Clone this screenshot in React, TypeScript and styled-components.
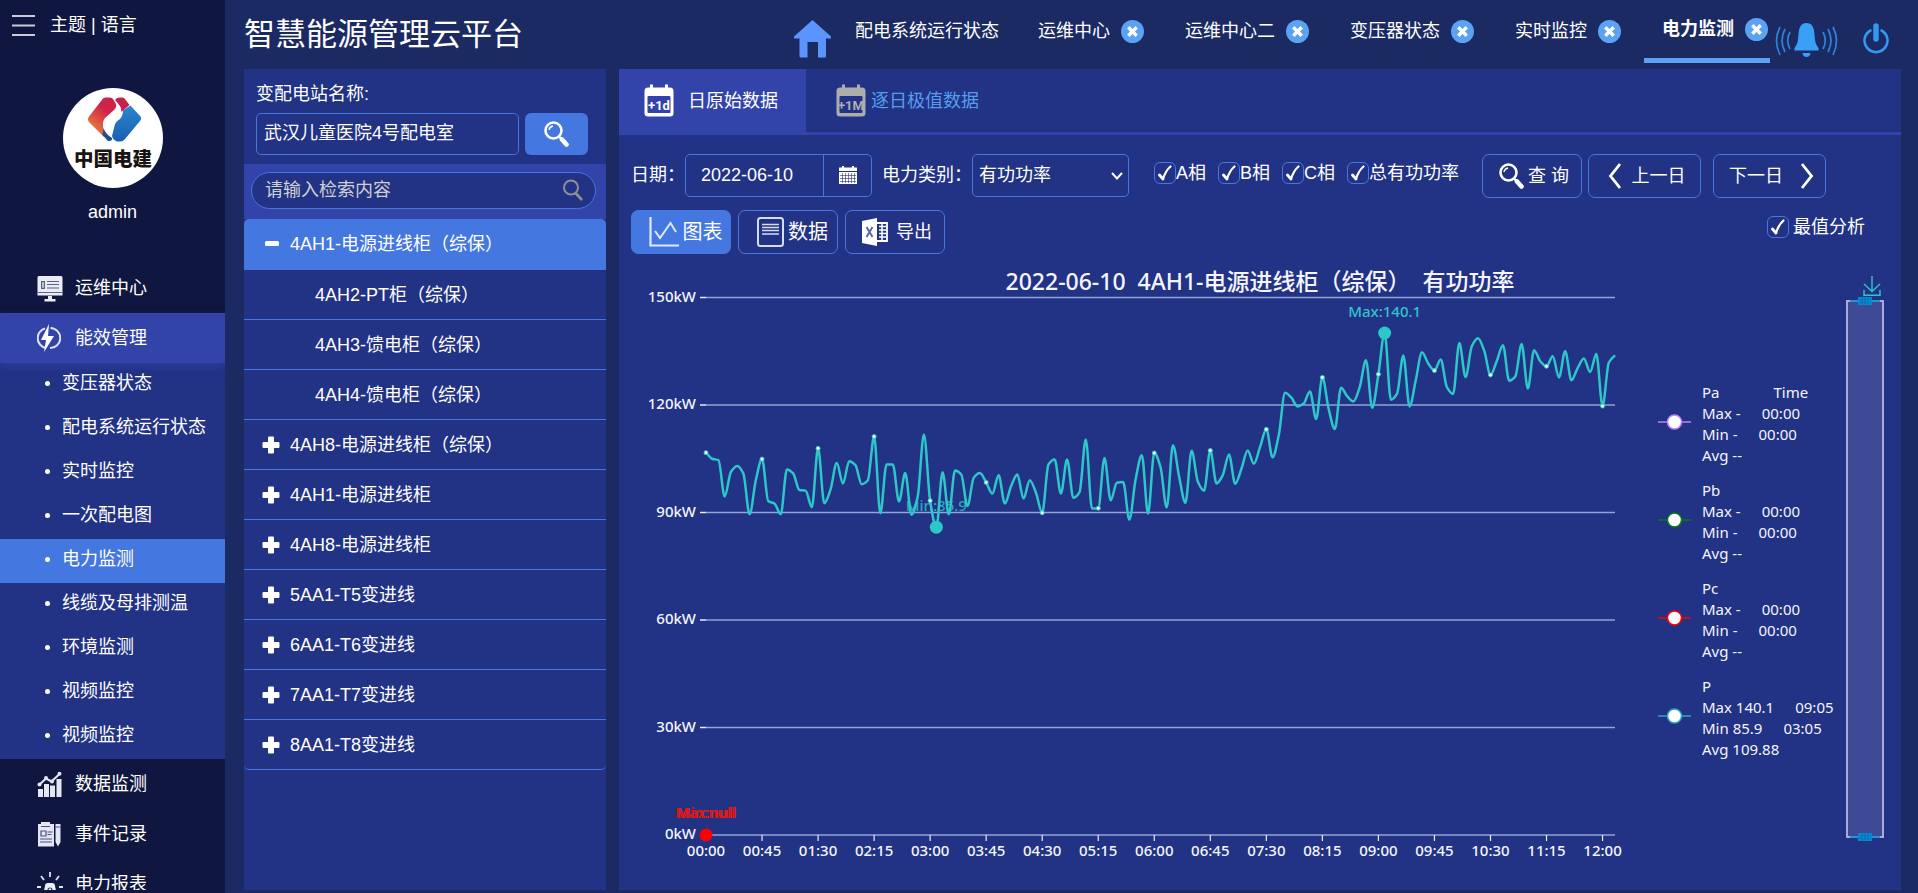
import React from "react";
import styled, { createGlobalStyle, css } from "styled-components";

const c = {
  page: "#1c2a64",
  side: "#0f1740",
  panel: "#223285",
  band: "#3244a9",
  accent: "#4477df",
  sky: "#5ba2f3",
  teal: "#2ec7c9",
};

const sans = `"Liberation Sans", "Noto Sans CJK SC", sans-serif`;
const chartFont = `"Noto Sans", "Noto Sans CJK SC", sans-serif`;

const GlobalStyle = createGlobalStyle`
  *, *::before, *::after { box-sizing: border-box; }
  body { margin: 0; background: ${c.page}; color: #fff; font: 18px/26px ${sans}; }
  button, input, select { font: inherit; color: inherit; margin: 0; }
  button { padding: 0; border: 0; background: none; cursor: pointer; }
  a { color: inherit; text-decoration: none; }
  ul { list-style: none; margin: 0; padding: 0; }
  h1, h2, p { margin: 0; font-weight: 400; }
  svg { display: block; flex: none; }
`;

/* ---------- shell ---------- */

const Shell = styled.div`
  display: flex;
  height: 100vh;
  overflow: hidden;
`;

const Sidebar = styled.aside`
  flex: 0 0 225px;
  background: ${c.side};
  padding-bottom: 3px;
  display: flex;
  flex-direction: column;
`;

const SideTop = styled.div`
  display: flex;
  align-items: center;
  gap: 15px;
  height: 50px;
  padding-left: 12px;
`;

const Profile = styled.div`
  display: flex;
  flex-direction: column;
  align-items: center;
  gap: 11px;
  padding-top: 38px;
  height: 213px;
`;

const Menu = styled.nav`
  flex: 1;
  min-height: 0;
  overflow: hidden;
`;

const MenuLink = styled.a<{ $open?: boolean }>`
  display: flex;
  align-items: center;
  height: 50px;
  padding-left: 37px;
  background: ${(p) => (p.$open ? c.band : "transparent")};
  span { flex: 0 0 38px; }
  ${(p) => p.$open && css`position: relative; box-shadow: 0 4px 8px rgba(50, 68, 169, 0.6);`}
`;

const SubMenu = styled.ul`
  background: ${c.panel};
`;

const SubLink = styled.a<{ $active?: boolean }>`
  display: flex;
  align-items: center;
  gap: 12px;
  height: 44px;
  padding: 0 0 4px 45px;
  background: ${(p) => (p.$active ? c.accent : "transparent")};
  &::before {
    content: "";
    width: 5px;
    height: 5px;
    border-radius: 50%;
    background: #fff;
  }
`;

const Main = styled.div`
  flex: 1;
  min-width: 0;
  display: flex;
  flex-direction: column;
  padding: 0 17px 3px 19px;
`;

/* ---------- header ---------- */

const Header = styled.header`
  display: flex;
  height: 69px;
`;

const Title = styled.h1`
  font-size: 31px;
  line-height: 69px;
  white-space: nowrap;
`;

const HeaderNav = styled.nav`
  display: flex;
  margin-left: auto;
  padding-right: 12px;
`;

const HomeLink = styled.a`
  padding: 20px 6px 0 0;
`;

const PageTab = styled.div<{ $active?: boolean }>`
  display: flex;
  align-items: center;
  gap: 11px;
  height: 63px;
  margin-right: 21px;
  padding: ${(p) => (p.$active ? "0" : "4px")} 2px 0 18px;
  border-bottom: 5px solid ${(p) => (p.$active ? c.sky : "transparent")};
  font-weight: ${(p) => (p.$active ? 700 : 400)};
  white-space: nowrap;
  &:first-of-type { padding-right: 0; }
  &:last-of-type { margin-right: 5px; }
`;

const CloseButton = styled.button`
  display: grid;
  place-items: center;
  width: 23px;
  height: 23px;
  border-radius: 50%;
  background: ${c.sky};
`;

const IconButton = styled.button`
  display: flex;
  align-self: flex-start;
  margin: 22px 0 0;
  & + & { margin-left: 25px; }
`;

/* ---------- tree panel ---------- */

const Content = styled.div`
  flex: 1;
  min-height: 0;
  display: flex;
  gap: 13px;
`;

const TreePanel = styled.section`
  flex: 0 0 362px;
  background: ${c.panel};
`;

const StationForm = styled.form`
  display: grid;
  grid-template-columns: 1fr 63px;
  column-gap: 6px;
  padding: 12px 18px 9px 12px;
  label { grid-column: 1 / 3; margin-bottom: 6px; }
`;

const TextBox = styled.input`
  min-width: 0;
  width: 100%;
  height: 42px;
  padding: 0 7px 6px;
  border: 1px solid ${c.accent};
  border-radius: 5px;
  background: transparent;
  outline: 0;
`;

const SquareButton = styled.button`
  display: grid;
  place-items: center;
  border-radius: 6px;
  background: ${c.accent};
`;

const SearchBand = styled.div`
  height: 55px;
  padding: 8px 10px 0 7px;
  background: ${c.band};
`;

const SearchPill = styled.div`
  display: flex;
  align-items: center;
  height: 37px;
  padding: 0 12px 2px 13px;
  border: 1px solid ${c.accent};
  border-radius: 19px;
  background: ${c.panel};
  input {
    flex: 1;
    min-width: 0;
    border: 0;
    padding: 0;
    outline: 0;
    background: transparent;
    &::placeholder { color: #cfd0d2; opacity: 1; }
  }
`;

const Tree = styled.ul`
  border-radius: 5px;
  overflow: hidden;
  border-bottom: 1px solid ${c.accent};
`;

const TreeItem = styled.button<{ $active?: boolean; $child?: boolean }>`
  display: flex;
  align-items: center;
  gap: 10px;
  width: 100%;
  height: 50px;
  padding-left: ${(p) => (p.$child ? 71 : 18)}px;
  border-bottom: 1px solid ${c.accent};
  background: ${(p) => (p.$active ? c.accent : "transparent")};
  text-align: left;
  li:first-child & { height: 51px; }
  li:last-child & { height: 49px; border-bottom: 0; }
`;

/* ---------- data panel ---------- */

const DataPanel = styled.section`
  flex: 1;
  min-width: 0;
  background: ${c.panel};
`;

const Tabs = styled.div`
  display: flex;
  height: 66px;
  border-bottom: 3px solid ${c.band};
`;

const Tab = styled.button<{ $active?: boolean }>`
  display: flex;
  align-items: center;
  height: 63px;
  gap: ${(p) => (p.$active ? 14 : 5)}px;
  padding: 0 28px 0 ${(p) => (p.$active ? 25 : 30)}px;
  background: ${(p) => (p.$active ? c.band : "transparent")};
  color: ${(p) => (p.$active ? "#fff" : "#559eee")};
`;

const Toolbar = styled.form`
  display: flex;
  padding: 19px 0 0 12px;
  white-space: nowrap;
  > label { line-height: 42px; }
`;

const DateBox = styled.div`
  display: flex;
  flex: 0 0 187px;
  min-width: 0;
  height: 43px;
  margin-right: 10px;
  border: 1px solid ${c.accent};
  border-radius: 5px;
  input {
    flex: 1;
    width: 0;
    min-width: 0;
    padding: 0 15px 1px;
    border: 0;
    border-right: 1px solid ${c.accent};
    background: transparent;
    outline: 0;
  }
  button { display: grid; place-items: center; flex: 0 0 47px; padding-bottom: 2px; }
`;

const SelectBox = styled.div`
  display: grid;
  flex: 0 0 157px;
  height: 43px;
  margin-right: 25px;
  > * { grid-area: 1 / 1; }
  select {
    appearance: none;
    padding: 0 6px 2px;
    border: 1px solid ${c.accent};
    border-radius: 5px;
    background: transparent;
    outline: 0;
  }
  option { color: #222; }
  svg { place-self: center end; margin-right: 6px; pointer-events: none; }
`;

const CheckGroup = styled.div`
  display: flex;
  gap: 12px;
  padding-top: 6px;
  margin-right: 23px;
`;

const CheckLabel = styled.label<{ $gap?: number }>`
  display: flex;
  align-items: center;
  align-self: flex-start;
  gap: ${(p) => p.$gap ?? 0}px;
`;

const Tick = styled.span`
  display: grid;
  place-items: center;
  > * { grid-area: 1 / 1; }
  input {
    appearance: none;
    width: 22px;
    height: 22px;
    border: 1px solid ${c.accent};
    border-radius: 6px;
  }
  svg { pointer-events: none; visibility: hidden; }
  input:checked + svg { visibility: visible; }
`;

const BoxButton = styled.button<{ $w: number; $gap?: number; $solid?: boolean; $big?: boolean }>`
  display: flex;
  align-items: center;
  justify-content: center;
  gap: ${(p) => p.$gap ?? 4}px;
  width: ${(p) => p.$w}px;
  height: 44px;
  padding-left: ${(p) => (p.$big ? 9 : 4)}px;
  border: 1px solid ${c.accent};
  border-radius: 7px;
  background: ${(p) => (p.$solid ? c.accent : "transparent")};
  font-size: ${(p) => (p.$big ? 20 : 18)}px;
`;

const QueryButtons = styled.div`
  display: flex;
  gap: 6px;
  button:last-child { margin-left: 6px; }
`;

const ViewRow = styled.div`
  display: flex;
  gap: 7px;
  padding: 12px 36px 0 12px;
  label { margin: 4px 0 0 auto; }
`;

/* ---------- chart ---------- */

const ChartHead = styled.div`
  display: grid;
  grid-template-columns: 1fr auto 1fr;
  height: 30px;
  margin-top: 12px;
  padding: 0 17px;
  font-family: ${chartFont};
  h2 { grid-column: 2; font-size: 23px; font-weight: 500; line-height: 30px; white-space: pre; color: #f4f5fb; }
  button { justify-self: end; align-self: end; margin-right: 3px; }
`;

const ChartBody = styled.div`
  display: flex;
  padding: 0 17px 0 12px;
  font: 15px/21px ${chartFont};
  font-weight: 500;
  color: #f4f5fb;
`;

const Plot = styled.svg`
  flex: 1 1 0;
  min-width: 0;
  overflow: visible;
`;

const Legend = styled.ul`
  flex: 0 0 188px;
  margin-left: 18px;
  padding-top: 86px;
`;

const LegendItem = styled.li`
  display: grid;
  grid-template-columns: 33px 1fr;
  column-gap: 11px;
  margin-bottom: 14px;
  svg { margin-top: 31px; }
`;

const LegendLine = styled.p<{ $gap: number }>`
  display: flex;
  gap: ${(p) => p.$gap}px;
  white-space: nowrap;
`;

const Slider = styled.div`
  position: relative;
  flex: 0 0 38px;
  margin: 4px 0 32px;
  border: 2px solid #a9abd6;
  background: #3f4a96;
`;

const Handle = styled.button<{ $end?: boolean }>`
  position: absolute;
  left: 2px;
  ${(p) => (p.$end ? "bottom: -5px;" : "top: -5px;")}
`;

/* ---------- icons ---------- */

const Magnifier = ({ color = "#fff", size = 25 }) => (
  <svg width={size} height={size + 1} viewBox="0 0 25 26" fill="none" stroke={color}>
    <circle cx="9.500" cy="9.500" r="8" strokeWidth="2.600" />
    <path d="M5 9a5 5 0 0 1 4-4" strokeWidth="1.300" />
    <path d="M15 15.500l2.500 2.500" strokeWidth="2.400" />
    <path d="M18 18.500l4.500 5" strokeWidth="4.600" strokeLinecap="round" />
  </svg>
);

const ThinMagnifier = () => (
  <svg width="20" height="22" viewBox="0 0 20 22" fill="none" stroke="#8e8f93" strokeWidth="2">
    <circle cx="8" cy="8.500" r="7" />
    <path d="M12.500 14l6.500 7" strokeWidth="2.600" />
  </svg>
);

const Check = () => (
  <svg width="14" height="16" viewBox="0 0 14 16" fill="none" stroke="#fff">
    <path d="M1.500 10l3.500 4" strokeWidth="2.800" strokeLinecap="round" />
    <path d="M5 14c1.500-5 4-9.500 7.500-12.500" strokeWidth="2.200" strokeLinecap="round" />
  </svg>
);

const Cross = () => (
  <svg width="11" height="11" viewBox="0 0 11 11" stroke="#fff" strokeWidth="3.400">
    <path d="M1.300 1.300l8.400 8.400M9.700 1.300l-8.400 8.400" />
  </svg>
);

const Sign = ({ open }: { open?: boolean }) => (
  <svg width="18" height="18" viewBox="0 0 18 18" fill="#fff">
    {open ? (
      <rect x="3" y="6" width="14" height="5" rx="1.500" />
    ) : (
      <>
        <rect x="0.500" y="6" width="17" height="6" rx="1" />
        <rect x="6" y="0.500" width="6" height="17" rx="1" />
      </>
    )}
  </svg>
);

const Chevron = ({ right }: { right?: boolean }) => (
  <svg width="14" height="28" viewBox="0 0 14 28" fill="none" stroke="#fff" strokeWidth="2.800">
    <path d={right ? "M2 2l9.500 12L2 26" : "M12 2L2.500 14 12 26"} />
  </svg>
);

const CalendarBadge = ({ unit, color, back }: { unit: string; color: string; back: string }) => (
  <svg width="30" height="33" viewBox="0 0 30 33">
    <path
      d="M4 3.500h2V.5h3v3h12V.5h3v3h2a3.500 3.500 0 0 1 3.500 3.500v22a3.500 3.500 0 0 1-3.500 3.500H4A3.500 3.500 0 0 1 .5 29V7A3.500 3.500 0 0 1 4 3.500z"
      fill={color}
    />
    <rect x="3.500" y="12" width="23" height="17" rx="1" fill={back} />
    <text x="15" y="26" textAnchor="middle" fontSize="13" fontWeight="700" fontFamily="Roboto, sans-serif" fill={color}>
      +1{unit}
    </text>
  </svg>
);

const CalendarGrid = () => (
  <svg width="18" height="18" viewBox="0 0 18 18">
    <path d="M0 1.500h3V0h2v1.500h8V0h2v1.500h3v3.500H0zM0 6h18v12H0z" fill="#fff" />
    <path d="M1 9.500h16M1 12.500h16M1 15.500h16M3.500 7v10M6.500 7v10M9.500 7v10M12.500 7v10M15.500 7v10" stroke={c.panel} strokeWidth="0.600" />
  </svg>
);

const Logo = () => (
  <svg width="100" height="100" viewBox="0 0 100 100" role="img" aria-label="中国电建">
    <defs>
      <linearGradient id="warm" x1="0.800" y1="0" x2="0.200" y2="1">
        <stop offset="0.300" stopColor="#cf2347" />
        <stop offset="1" stopColor="#f08a3c" />
      </linearGradient>
      <linearGradient id="cool" x1="0.300" y1="0" x2="0.300" y2="1">
        <stop offset="0" stopColor="#2a86cf" />
        <stop offset="1" stopColor="#1a5fb0" />
      </linearGradient>
    </defs>
    <circle cx="50" cy="50" r="50" fill="#fff" />
    <path d="M40 10.500Q41 9.500 43 9.500H47Q49 9.500 50 11L53 16Q54 19 51 22L42 30Q39.500 33 40 38L41 49L25.500 33.500Q24 31 26 28.500z" fill="url(#warm)" />
    <path d="M40.500 40Q42.500 46 49 50Q49.500 53 46 53H45L39.500 47z" fill="#1b4d96" />
    <path d="M52 12L54 10Q55 9.500 57 9.500H59.500Q61 9.500 62 11L66.500 17Q62 21 58.500 24Q59 19 52 12z" fill="#c9204a" />
    <path d="M60 22.500L67.500 17.500L77.500 28.500Q79 30.500 77 33L62 51Q60 53.500 57 53.500H54Q50 52 49 48L51.500 38Q52 34 57 31Q60 28 60 22.500z" fill="url(#cool)" />
    <text x="50" y="78" textAnchor="middle" fontSize="19.500" fontWeight="900" fontFamily="Noto Sans CJK SC, sans-serif" fill="#1a1512">
      中国电建
    </text>
  </svg>
);

const MonitorIcon = () => (
  <svg width="26" height="27" viewBox="0 0 26 27" fill="#e9ebf5">
    <path d="M2 1h22a1.500 1.500 0 0 1 1.500 1.500v18H.5v-18A1.500 1.500 0 0 1 2 1zM11 21h4v3h3.500v2.500h-11V24H11z" />
    <path d="M4 6h4v8H4zM10 6h12v1H10zM10 9h12v1H10zM10 12.500h12v1H10zM1 17h24v1H1z" fill="#5b628b" />
    <path d="M5.300 7.300h1.400v5.400H5.300z" />
  </svg>
);

const BoltIcon = () => (
  <svg width="24" height="30" viewBox="0 0 24 30">
    <path d="M8 5.500A10 10 0 0 0 9 25M13.500 5A10 10 0 0 1 13 25" fill="none" stroke="#dfe3f6" strokeWidth="2" />
    <path d="M12 1L4 17h5l-2 12L17 13h-6z" fill="#fff" />
  </svg>
);

const BarsIcon = () => (
  <svg width="26" height="26" viewBox="0 0 26 26" fill="#e4e6f2">
    <path d="M1 18h5v8H1zM7 13h5v13H7zM13 14.500h5V26h-5zM19.500 8h5v18h-5z" />
    <path d="M2 14l7-6.500 5.500 3L22.500 3" fill="none" stroke="#e4e6f2" strokeWidth="2" />
    <circle cx="2.500" cy="13.500" r="2" />
    <circle cx="9" cy="7" r="2" />
    <circle cx="15" cy="10.500" r="2" />
    <circle cx="22.500" cy="2.800" r="2" />
  </svg>
);

const RecordIcon = () => (
  <svg width="26" height="26" viewBox="0 0 26 26" fill="#e4e6f2">
    <path d="M1 3h3V1h9v2h4v22.500H1zM18.500 3H23.500v18L21 25.500 18.500 21z" />
    <path d="M4 5.500h9M10.500 11h5M10.500 13.500h4M3 18h12M3 21h12M4 10h5v5H4zM18.500 6h5" fill="none" stroke="#4a5180" strokeWidth="1.200" />
  </svg>
);

const AlarmIcon = () => (
  <svg width="26" height="26" viewBox="0 0 26 26">
    <path d="M6 24l2-9q0-3 3-3h4q3 0 3 3l2 9z" fill="#eceef8" />
    <path d="M11 22v-3a2 2 0 0 1 4 0v3" fill="none" stroke="#343c6b" strokeWidth="1.200" />
    <path d="M13 1v5M4 5l3 4M22 5l-3 4M0 16h4M22 16h4" stroke="#dfe2f2" strokeWidth="1.800" />
  </svg>
);

const HomeIcon = () => (
  <svg width="37" height="38" viewBox="0 0 37 38" fill="#5b94ff">
    <path d="M18.500 0L37 16.500v2h-5V36a1.500 1.500 0 0 1-1.500 1.500H24V22H13.500v15.500H7A1.500 1.500 0 0 1 5.500 36V18.500H0v-2z" />
  </svg>
);

const BellIcon = () => (
  <svg width="63" height="36" viewBox="0 0 63 36">
    <path d="M31.500 1c5.500 0 7.500 4.500 8 11 .4 7 1 10 4 14v2.500h-24V26c3-4 3.600-7 4-14 .5-6.500 2.500-11 8-11zM27.500 31h8q-.5 4-4 4t-4-4z" fill="#39a0f5" />
    <g fill="none" stroke="#2f85d8" strokeWidth="1.700">
      <path d="M15 10q-4.500 8.500 0 17M10 7q-6 11.500 0 23M5 5q-7 13.500 0 28" />
      <path d="M48 10q4.500 8.500 0 17M53 7q6 11.500 0 23M58 5q7 13.500 0 28" />
    </g>
  </svg>
);

const PowerIcon = () => (
  <svg width="26" height="34" viewBox="0 0 26 34" fill="none" stroke="#3398f0" strokeLinecap="round">
    <path d="M7.500 8.500a11.500 11.500 0 1 0 11 0" strokeWidth="2.600" />
    <path d="M13 4v13" strokeWidth="5.500" />
  </svg>
);

const LineIcon = () => (
  <svg width="30" height="30" viewBox="0 0 30 30" fill="none" stroke="#dfe8fb">
    <path d="M1.500 0v28.500H30" strokeWidth="2.200" />
    <path d="M6 14l5 7L21.500 6l5.500 9" strokeWidth="2" />
  </svg>
);

const ListIcon = () => (
  <svg width="27" height="30" viewBox="0 0 27 30" fill="none" stroke="#d8dcf2" strokeWidth="2">
    <rect x="1" y="1" width="25" height="28" rx="2.500" />
    <path d="M5 7.500h17M5 10.500h17M5 13.500h17M5 17h17" strokeWidth="1.500" />
  </svg>
);

const ExcelIcon = () => (
  <svg width="26" height="28" viewBox="0 0 26 28">
    <path d="M0 3L15 0v28L0 25z" fill="#fff" />
    <path d="M4.500 9l6 10M10.500 9l-6 10" stroke="#5a68ab" strokeWidth="2" />
    <path d="M15 5h10v18H15" fill="none" stroke="#fff" strokeWidth="1.800" />
    <path d="M17 8.500h7M17 12h7M17 15.500h7M17 19h7M20 6v16" stroke="#fff" strokeWidth="1.500" />
  </svg>
);

const HandleIcon = () => (
  <svg width="30" height="8" viewBox="0 0 30 8">
    <path d="M0 4h30" stroke="#008acd" strokeWidth="1.500" />
    <rect x="8" y="0" width="14" height="8" fill="#008acd" />
    <path d="M12 1.500v5M15 1.500v5M18 1.500v5" stroke="#1b4f96" strokeDasharray="2 1" />
  </svg>
);

/* ---------- data ---------- */

const openTabs = ["运维中心", "运维中心二", "变压器状态", "实时监控", "电力监测"];

const subMenu = [
  "变压器状态", "配电系统运行状态", "实时监控", "一次配电图", "电力监测",
  "线缆及母排测温", "环境监测", "视频监控", "视频监控",
];

const tree: { name: string; child?: boolean; open?: boolean }[] = [
  { name: "4AH1-电源进线柜（综保）", open: true },
  { name: "4AH2-PT柜（综保）", child: true },
  { name: "4AH3-馈电柜（综保）", child: true },
  { name: "4AH4-馈电柜（综保）", child: true },
  { name: "4AH8-电源进线柜（综保）" },
  { name: "4AH1-电源进线柜" },
  { name: "4AH8-电源进线柜" },
  { name: "5AA1-T5变进线" },
  { name: "6AA1-T6变进线" },
  { name: "7AA1-T7变进线" },
  { name: "8AA1-T8变进线" },
];

const legend = [
  { name: "Pa", color: "#b886f8", max: ["-", "00:00"], min: ["-", "00:00"], avg: "--", time: "Time" },
  { name: "Pb", color: "#0a7a1a", max: ["-", "00:00"], min: ["-", "00:00"], avg: "--" },
  { name: "Pc", color: "#ff0000", max: ["-", "00:00"], min: ["-", "00:00"], avg: "--" },
  { name: "P", color: "#2aa9bd", max: ["140.1", "09:05"], min: ["85.9", "03:05"], avg: "109.88" },
];

/* active power in kW, one sample every five minutes from midnight */
const power = [
  106.7, 105.0, 104.6, 94.5, 101.3, 103.0, 100.9, 89.5, 99.0, 104.9,
  93.2, 92.5, 89.5, 102.0, 100.9, 96.3, 96.1, 91.5, 107.9, 92.6,
  96.4, 103.8, 98.1, 104.3, 103.2, 97.9, 99.0, 111.2, 89.8, 103.4,
  103.4, 93.1, 101.0, 89.4, 94.4, 111.8, 93.3, 85.9, 101.2, 89.5,
  101.7, 100.6, 91.8, 99.7, 101.0, 98.4, 95.3, 100.4, 92.5, 97.3,
  100.6, 93.9, 99.0, 95.5, 89.9, 103.4, 104.8, 95.3, 104.8, 94.1,
  95.7, 110.4, 91.1, 91.2, 105.2, 93.4, 98.3, 98.5, 88.0, 99.2,
  106.0, 89.7, 106.6, 102.7, 91.4, 108.8, 99.9, 92.7, 107.2, 98.6,
  96.1, 107.3, 98.1, 100.4, 106.2, 98.0, 102.2, 107.3, 103.6, 108.3,
  113.2, 105.4, 111.6, 123.4, 122.1, 119.6, 120.4, 123.8, 116.1, 127.7,
  119.0, 113.3, 124.8, 122.4, 121.0, 125.0, 132.5, 119.2, 128.6, 140.1,
  121.5, 123.2, 133.8, 119.6, 126.9, 134.7, 131.6, 129.6, 132.7, 125.0,
  123.1, 137.3, 127.8, 136.4, 138.6, 135.1, 128.4, 132.2, 136.7, 126.8,
  128.0, 137.0, 124.6, 135.3, 132.2, 130.8, 133.6, 127.7, 135.0, 126.9,
  130.3, 133.0, 129.2, 134.2, 119.7, 131.8, 133.9,
];

const W = 1009;
const H = 574;
const X0 = 75;
const X1 = 984;
const Y0 = 539;
const px = (i: number) => X0 + ((X1 - X0) * i) / (power.length - 1);
const py = (kw: number) => Y0 - (kw * 537.5) / 150;

/* monotone cubic through every sample, so peaks never overshoot */
function smoothPath(values: number[]) {
  const pts = values.map((v, i) => [px(i), py(v)]);
  const dx = pts[1][0] - pts[0][0];
  const slope = pts.map((_, i) => {
    if (i === 0 || i === pts.length - 1) return 0;
    const a = (pts[i][1] - pts[i - 1][1]) / dx;
    const b = (pts[i + 1][1] - pts[i][1]) / dx;
    return a * b <= 0 ? 0 : (2 * a * b) / (a + b);
  });
  slope[0] = (pts[1][1] - pts[0][1]) / dx;
  slope[pts.length - 1] = (pts[pts.length - 1][1] - pts[pts.length - 2][1]) / dx;
  return pts
    .map(([x, y], i) => {
      if (i === 0) return `M${x} ${y}`;
      const [ax, ay] = pts[i - 1];
      return `C${ax + dx / 3} ${ay + (slope[i - 1] * dx) / 3} ${x - dx / 3} ${y - (slope[i] * dx) / 3} ${x} ${y}`;
    })
    .join("");
}

const clock = (i: number) =>
  `${String(Math.floor((i * 5) / 60)).padStart(2, "0")}:${String((i * 5) % 60).padStart(2, "0")}`;

const marks = power.map((_, i) => i).filter((i) => i % 9 === 0);

const PowerChart = () => (
  <Plot viewBox={`0 0 ${W} ${H}`} fontSize="15" fill="#f4f5fb" role="img" aria-label="有功功率">
    {[150, 120, 90, 60, 30, 0].map((kw) => (
      <g key={kw}>
        <path d={`M${X0 - 6} ${py(kw)}H${X0}`} stroke="#e8ecf8" strokeWidth="1.500" />
        <path d={`M${X0} ${py(kw)}H${X1}`} stroke="#8fa6d6" strokeWidth="1.500" />
        <text x={X0 - 10} y={py(kw) + 4} textAnchor="end">{kw}kW</text>
      </g>
    ))}
    {marks.map((i) => (
      <g key={i}>
        <path d={`M${px(i)} ${Y0}v6`} stroke="#e8ecf8" strokeWidth="1.200" />
        <text x={px(i)} y={Y0 + 21} textAnchor="middle">{clock(i)}</text>
      </g>
    ))}
    <text x={px(37)} y={py(85.9) - 16} textAnchor="middle" fill={c.teal} opacity="0.8">Min:85.9</text>
    <path d={smoothPath(power)} fill="none" stroke={c.teal} strokeWidth="2.500" strokeLinejoin="round" />
    {marks.map((i) => (
      <circle key={i} cx={px(i)} cy={py(power[i])} r="2" fill="#fff" stroke={c.teal} strokeWidth="1" />
    ))}
    <circle cx={px(37)} cy={py(85.9)} r="6.500" fill={c.teal} />
    <circle cx={px(109)} cy={py(140.1)} r="6.500" fill={c.teal} />
    <text x={px(109)} y={py(140.1) - 16} textAnchor="middle" fill={c.teal}>Max:140.1</text>
    <circle cx={X0} cy={Y0} r="6.500" fill="#ff0000" />
    <g fill="#e01a10" textAnchor="middle">
      <text x={X0} y={Y0 - 17}>Max:null</text>
      <text x={X0} y={Y0 - 17}>Min:null</text>
    </g>
  </Plot>
);

const Checkbox = ({ label, gap }: { label: string; gap?: number }) => (
  <CheckLabel $gap={gap}>
    <Tick>
      <input type="checkbox" defaultChecked />
      <Check />
    </Tick>
    {label}
  </CheckLabel>
);

export default function App() {
  return (
    <>
      <GlobalStyle />
      <Shell>
        <Sidebar>
          <SideTop>
            <button aria-label="菜单">
              <svg width="23" height="23" viewBox="0 0 23 23" stroke="#c9cbd6" strokeWidth="2">
                <path d="M0 2h23M0 11.500h23M0 21h23" />
              </svg>
            </button>
            <span>主题 | 语言</span>
          </SideTop>
          <Profile>
            <Logo />
            <span>admin</span>
          </Profile>
          <Menu>
            <MenuLink href="#"><span><MonitorIcon /></span>运维中心</MenuLink>
            <MenuLink href="#" $open><span><BoltIcon /></span>能效管理</MenuLink>
            <SubMenu>
              {subMenu.map((name, i) => (
                <li key={i}>
                  <SubLink href="#" $active={name === "电力监测"}>{name}</SubLink>
                </li>
              ))}
            </SubMenu>
            <MenuLink href="#"><span><BarsIcon /></span>数据监测</MenuLink>
            <MenuLink href="#"><span><RecordIcon /></span>事件记录</MenuLink>
            <MenuLink href="#"><span><AlarmIcon /></span>电力报表</MenuLink>
          </Menu>
        </Sidebar>

        <Main>
          <Header>
            <Title>智慧能源管理云平台</Title>
            <HeaderNav>
              <HomeLink href="#" aria-label="首页"><HomeIcon /></HomeLink>
              <PageTab><a href="#">配电系统运行状态</a></PageTab>
              {openTabs.map((name) => (
                <PageTab key={name} $active={name === "电力监测"}>
                  <a href="#">{name}</a>
                  <CloseButton aria-label={`关闭${name}`}><Cross /></CloseButton>
                </PageTab>
              ))}
              <IconButton aria-label="告警"><BellIcon /></IconButton>
              <IconButton aria-label="退出"><PowerIcon /></IconButton>
            </HeaderNav>
          </Header>

          <Content>
            <TreePanel>
              <StationForm>
                <label htmlFor="station">变配电站名称:</label>
                <TextBox id="station" defaultValue="武汉儿童医院4号配电室" />
                <SquareButton type="button" aria-label="搜索"><Magnifier /></SquareButton>
              </StationForm>
              <SearchBand>
                <SearchPill>
                  <input aria-label="检索" placeholder="请输入检索内容" />
                  <ThinMagnifier />
                </SearchPill>
              </SearchBand>
              <Tree>
                {tree.map((item) => (
                  <li key={item.name}>
                    <TreeItem $active={item.open} $child={item.child}>
                      {!item.child && <Sign open={item.open} />}
                      {item.name}
                    </TreeItem>
                  </li>
                ))}
              </Tree>
            </TreePanel>

            <DataPanel>
              <Tabs>
                <Tab $active><CalendarBadge unit="d" color="#fff" back={c.band} />日原始数据</Tab>
                <Tab><CalendarBadge unit="M" color="#adadad" back={c.panel} />逐日极值数据</Tab>
              </Tabs>
              <Toolbar>
                <label htmlFor="day">日期：</label>
                <DateBox>
                  <input id="day" defaultValue="2022-06-10" />
                  <button type="button" aria-label="选择日期"><CalendarGrid /></button>
                </DateBox>
                <label htmlFor="kind">电力类别：</label>
                <SelectBox>
                  <select id="kind" defaultValue="有功功率">
                    <option>有功功率</option>
                  </select>
                  <svg width="12" height="8" viewBox="0 0 12 8" fill="none" stroke="#fff" strokeWidth="2">
                    <path d="M1 1l5 5.500L11 1" />
                  </svg>
                </SelectBox>
                <CheckGroup>
                  <Checkbox label="A相" />
                  <Checkbox label="B相" />
                  <Checkbox label="C相" />
                  <Checkbox label="总有功功率" />
                </CheckGroup>
                <QueryButtons>
                  <BoxButton type="button" $w={100}><Magnifier />查 询</BoxButton>
                  <BoxButton type="button" $w={113} $gap={10}><Chevron />上一日</BoxButton>
                  <BoxButton type="button" $w={113} $gap={17}>下一日<Chevron right /></BoxButton>
                </QueryButtons>
              </Toolbar>
              <ViewRow>
                <BoxButton $w={100} $big $solid><LineIcon />图表</BoxButton>
                <BoxButton $w={100} $big><ListIcon />数据</BoxButton>
                <BoxButton $w={100} $gap={8}><ExcelIcon />导出</BoxButton>
                <Checkbox label="最值分析" gap={4} />
              </ViewRow>
              <ChartHead>
                <h2>2022-06-10  4AH1-电源进线柜（综保）  有功功率</h2>
                <button aria-label="下载">
                  <svg width="18" height="20" viewBox="0 0 18 20" fill="none" stroke={c.teal} strokeWidth="1.400">
                    <path d="M9 0v15M1 8l8 7.500L17 8M1 14v5.300h16V14" />
                  </svg>
                </button>
              </ChartHead>
              <ChartBody>
                <PowerChart />
                <Legend>
                  {legend.map((s) => (
                    <LegendItem key={s.name}>
                      <svg width="33" height="18" viewBox="0 0 33 18" stroke={s.color} strokeWidth="1.500">
                        <path d="M0 9h33" />
                        <circle cx="16.500" cy="9" r="7" fill="#fff" />
                      </svg>
                      <div>
                        <LegendLine $gap={54}><span>{s.name}</span>{s.time && <span>{s.time}</span>}</LegendLine>
                        <LegendLine $gap={21}><span>Max {s.max[0]}</span><span>{s.max[1]}</span></LegendLine>
                        <LegendLine $gap={21}><span>Min {s.min[0]}</span><span>{s.min[1]}</span></LegendLine>
                        <LegendLine $gap={0}><span>Avg {s.avg}</span></LegendLine>
                      </div>
                    </LegendItem>
                  ))}
                </Legend>
                <Slider>
                  <Handle aria-label="上限"><HandleIcon /></Handle>
                  <Handle aria-label="下限" $end><HandleIcon /></Handle>
                </Slider>
              </ChartBody>
            </DataPanel>
          </Content>
        </Main>
      </Shell>
    </>
  );
}
